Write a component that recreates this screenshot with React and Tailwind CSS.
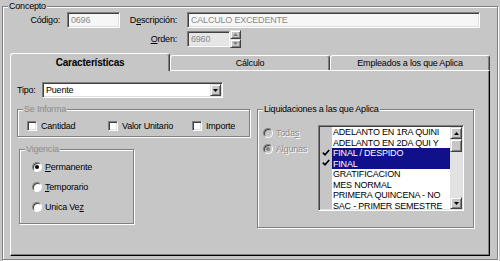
import React from 'react';

// Win classic style bevels
const etched = 'border border-[#808080] shadow-[inset_1px_1px_0_#fff,1px_1px_0_#fff]';
const sunken =
  'border border-t-[#808080] border-l-[#808080] border-b-white border-r-white shadow-[inset_1px_1px_0_#404040,inset_-1px_-1px_0_#dfdfdf]';
const raised =
  'border border-t-[#e0e0e0] border-l-[#e0e0e0] border-b-[#404040] border-r-[#404040] shadow-[inset_1px_1px_0_#fff,inset_-1px_-1px_0_#808080] bg-[#c6c6c6]';

const Arrow = ({ up, color = '#000' }) => (
  <svg width="5" height="3" viewBox="0 0 5 3">
    <path d={up ? 'M0 3h5L2.5 0z' : 'M0 0h5L2.5 3z'} fill={color} />
  </svg>
);

const GroupBox = ({ label, disabled, className, children }) => (
  <div className={`relative ${etched} ${className}`}>
    <span
      className={`absolute -top-[7px] left-[5px] bg-[#c6c6c6] px-px leading-[12px] ${
        disabled ? 'text-[#8c8c8c]' : 'text-black'
      }`}
    >
      {label}
    </span>
    {children}
  </div>
);

const Checkbox = ({ label, className }) => (
  <div className={`flex items-center ${className}`}>
    <div className={`h-[10px] w-[10px] bg-white ${sunken}`} />
    <span className="ml-[4px]">{label}</span>
  </div>
);

const Radio = ({ checked, disabled, children }) => (
  <div className="flex h-[20px] items-center">
    <div
      className={`flex h-[10px] w-[10px] items-center justify-center rounded-full border border-t-[#808080] border-l-[#808080] border-b-white border-r-white shadow-[inset_1px_1px_0_#404040] ${
        disabled ? 'bg-[#c6c6c6]' : 'bg-white'
      }`}
    >
      {checked && (
        <div className={`h-[4px] w-[4px] rounded-full ${disabled ? 'bg-[#808080]' : 'bg-black'}`} />
      )}
    </div>
    <span className={`ml-[3px] ${disabled ? 'text-[#8c8c8c] [text-shadow:1px_1px_0_#fff]' : ''}`}>{children}</span>
  </div>
);

const Check = () => (
  <svg width="8" height="7" viewBox="0 0 8 7">
    <path d="M0.8 3.6 L3 5.8 L7.2 1" stroke="#000" strokeWidth="1.6" fill="none" />
  </svg>
);

const items = [
  { text: 'ADELANTO EN 1RA QUINI' },
  { text: 'ADELANTO EN 2DA QUI Y' },
  { text: 'FINAL / DESPIDO', sel: true },
  { text: 'FINAL', sel: true },
  { text: 'GRATIFICACION' },
  { text: 'MES NORMAL' },
  { text: 'PRIMERA QUINCENA - NO' },
  { text: 'SAC - PRIMER SEMESTRE' },
];

const Tab = ({ active, children }) => (
  <div
    className={`flex w-[160px] items-center justify-center rounded-t-[3px] border-l border-t border-r border-l-white border-t-white border-r-[#404040] bg-[#c6c6c6] shadow-[inset_-1px_0_0_#808080] ${
      active ? 'relative z-10 -mb-px h-[18px] text-[10px] font-bold' : 'h-[15px]'
    }`}
  >
    {children}
  </div>
);

export default function App() {
  return (
    <div className="h-[261px] w-[500px] overflow-hidden bg-[#c6c6c6] pl-[2px] pt-[6px] font-['Liberation_Sans',Arial,sans-serif] text-[9px] leading-[12px] tracking-[-0.2px] text-black">
      <GroupBox label="Concepto" className="h-[254px] w-[496px]">
        {/* fila 1 */}
        <div className="mt-[5px] flex h-[16px] items-center">
          <span className="w-[57px] text-right">Código:</span>
          <div className={`ml-[7px] flex h-[16px] w-[53px] items-center bg-[#f6f6f6] pl-[3px] text-[#8a8a8a] ${sunken}`}>
            0696
          </div>
          <span className="w-[57px] text-right">
            D<u>e</u>scripción:
          </span>
          <div className={`ml-[10px] flex h-[16px] w-[293px] items-center bg-[#f6f6f6] pl-[3px] text-[#8a8a8a] ${sunken}`}>
            CALCULO EXCEDENTE
          </div>
        </div>

        {/* fila 2 */}
        <div className="mt-[2px] flex h-[18px] items-center">
          <span className="w-[174px] text-right">
            <u>O</u>rden:
          </span>
          <div className={`ml-[10px] flex h-[16px] w-[43px] items-center bg-[#e6e6e6] pl-[3px] text-[#8a8a8a] ${sunken}`}>
            6960
          </div>
          <div className="flex h-[18px] w-[11px] flex-col">
            <div className={`flex h-[9px] items-center justify-center ${raised}`}>
              <Arrow up color="#808080" />
            </div>
            <div className={`flex h-[9px] items-center justify-center ${raised}`}>
              <Arrow color="#808080" />
            </div>
          </div>
        </div>

        {/* pestañas */}
        <div className="ml-[7px] mt-[5px] flex items-end">
          <Tab active>Características</Tab>
          <Tab>Cálculo</Tab>
          <Tab>Empleados a los que Aplica</Tab>
        </div>

        <div className="ml-[7px] h-[186px] w-[480px] border border-t-white border-l-white border-r-black border-b-black pl-[6px] shadow-[inset_-1px_-1px_0_#808080]">
          <div className="mt-[11px] flex h-[16px] items-center">
            <span className="w-[25px]">Tipo:</span>
            <div className={`flex h-[16px] w-[181px] items-center bg-white p-px ${sunken}`}>
              <span className="flex-1 pl-[2px]">Puente</span>
              <div className={`flex h-full w-[11px] items-center justify-center ${raised}`}>
                <Arrow />
              </div>
            </div>
          </div>

          <div className="mt-[11px] flex">
            <div className="flex w-[233px] flex-col">
              <GroupBox label="Se Informa" disabled className="flex h-[28px] items-center pl-[9px] pt-[6px]">
                <Checkbox label="Cantidad" className="w-[81px]" />
                <Checkbox label="Valor Unitario" className="w-[84px]" />
                <Checkbox label="Importe" />
              </GroupBox>

              <GroupBox label="Vigencia" disabled className="ml-[2px] mt-[12px] h-[75px] w-[115px] pl-[12px] pt-[7px]">
                <Radio checked>
                  <u>P</u>ermanente
                </Radio>
                <Radio>
                  <u>T</u>emporario
                </Radio>
                <Radio>
                  Unica Ve<u>z</u>
                </Radio>
              </GroupBox>
            </div>

            <GroupBox label="Liquidaciones a las que Aplica" className="ml-[7px] flex h-[119px] w-[217px]">
              <div className="mt-[13px] flex w-[60px] flex-col pl-[5px]">
                <div className="-mb-[4px]">
                  <Radio disabled>
                    Toda<u>s</u>
                  </Radio>
                </div>
                <Radio checked disabled>
                  Algunas
                </Radio>
              </div>

              <div className={`mt-[15px] flex h-[86px] w-[146px] p-px ${sunken}`}>
                <div className="flex w-[12px] flex-col">
                  {items.map((it, i) => (
                    <div key={i} className="flex h-[10.5px] items-center justify-center">
                      {it.sel && <Check />}
                    </div>
                  ))}
                </div>
                <div className="w-[118px] overflow-hidden bg-white">
                  {items.map((it, i) => (
                    <div
                      key={i}
                      className={`h-[10.5px] whitespace-nowrap pl-px leading-[10.5px] ${
                        it.sel ? 'bg-[#10108a] text-white' : ''
                      }`}
                    >
                      {it.text}
                    </div>
                  ))}
                </div>
                <div className="flex w-[12px] flex-col bg-[#e2e2e2]">
                  <div className={`flex h-[12px] items-center justify-center ${raised}`}>
                    <Arrow up />
                  </div>
                  <div className={`h-[13px] ${raised}`} />
                  <div className="flex-1" />
                  <div className={`flex h-[12px] items-center justify-center ${raised}`}>
                    <Arrow />
                  </div>
                </div>
              </div>
            </GroupBox>
          </div>
        </div>
      </GroupBox>
    </div>
  );
}
